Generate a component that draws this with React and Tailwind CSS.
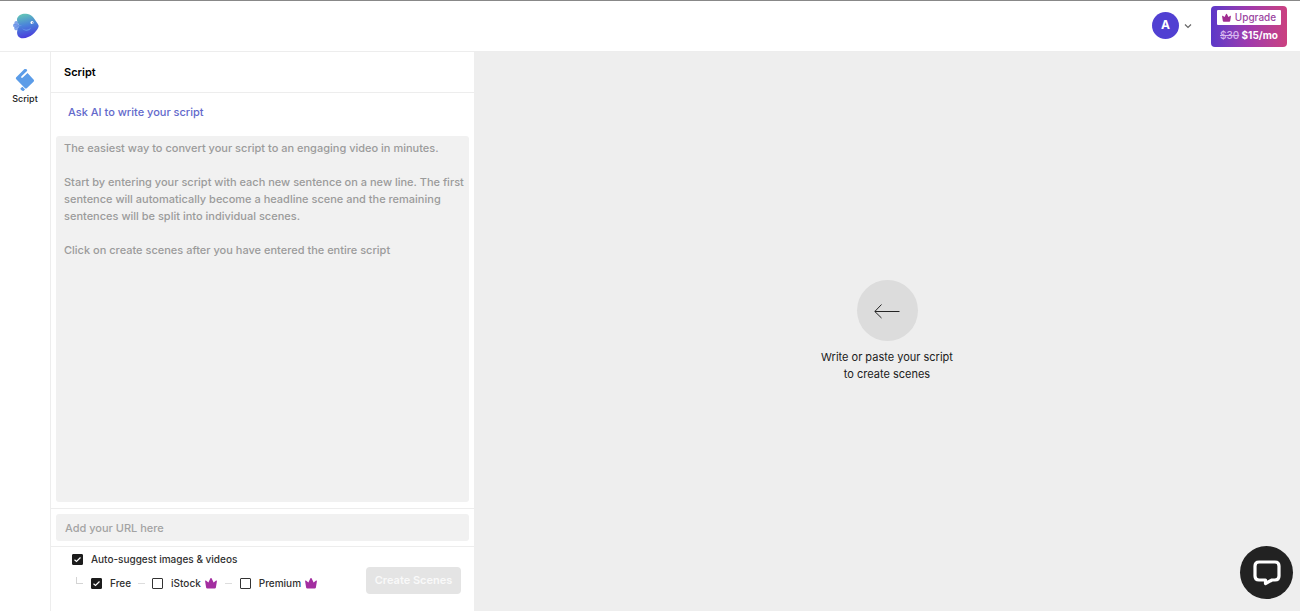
import { useState } from 'react';

const scriptHint = `The easiest way to convert your script to an engaging video in minutes.

Start by entering your script with each new sentence on a new line. The first sentence will automatically become a headline scene and the remaining sentences will be split into individual scenes.

Click on create scenes after you have entered the entire script`;

function Logo() {
  return (
    <svg viewBox="0 0 26 26" className="size-[26px]" aria-label="Home" role="img">
      <defs>
        <linearGradient id="fish" x1="0.4" y1="0" x2="0.6" y2="1">
          <stop offset="0" stopColor="#62c3b8" />
          <stop offset="0.45" stopColor="#4a83da" />
          <stop offset="1" stopColor="#4a35dc" />
        </linearGradient>
      </defs>
      <path d="M5 9C3.500 7 1 8 1.500 10.500C-.5 11-.3 14 1.300 14.300C.5 17 3.500 18.500 5.500 16Z" fill="#80a4ea" />
      <path d="M4 6C5 2 9 .4 13 .7C18 1 21 4.500 23.500 9C25.500 12 26 12.500 25.500 14C23.500 19 17 25 10 25.300C5.500 25.300 3.500 22 4.200 18C4.500 16 5.700 14.500 5.700 12.500C5.700 10 3.500 8.500 4 6Z" fill="url(#fish)" />
      <path d="M9 15C11 17 15 17.500 18 14.500C17 18.500 11 19 9 15Z" fill="#6799ea" />
      <path d="M1 11.500L7 12.500L2 14.500" fill="none" stroke="#6991e6" strokeWidth="1.200" />
      <circle cx="19" cy="9.500" r="1.500" fill="#fff" />
      <circle cx="19.600" cy="9.800" r="0.600" fill="#3762b9" />
    </svg>
  );
}

function ScriptIcon() {
  return (
    <svg viewBox="0 0 20 24" className="h-6 w-5" fill="#5b9ce8" aria-hidden="true">
      <path d="M1.500 9L9 1.500C10.500 .3 13 1.500 12 3L6.500 8.300C5.500 9.300 6.700 10.500 7.800 9.500L12.500 5L18.500 11.500C19.200 12.300 19.200 13 18.500 13.700L12 20C11.200 20.700 10.500 20.700 9.800 20L1.500 11.500C.5 10.500.7 9.800 1.500 9Z" />
      <path d="M5.500 20.300L7.500 18.800L10 21.500L8.500 23C7.500 23.500 5 21.500 5.500 20.300Z" />
    </svg>
  );
}

function Crown({ className }) {
  return (
    <svg viewBox="0 0 12 12" className={className} fill="currentColor" aria-hidden="true">
      <path d="M0.900 3.600L3.400 5.400L5.400 1.300A.8.8 0 0 1 6.600 1.300L8.600 5.400L11.100 3.600A.6.6 0 0 1 11.900 4.200L10.900 10.500Q10.700 11.500 9.700 11.500H2.300Q1.300 11.500 1.100 10.500L.1 4.200A.6.6 0 0 1 .9 3.600Z" />
    </svg>
  );
}

function Checkbox({ label, checked, onChange, children }) {
  return (
    <label className="flex items-center gap-2 text-[10px] leading-4 font-medium text-[#303030]">
      <span className="grid size-[11px] shrink-0">
        <input type="checkbox" checked={checked} onChange={onChange} className="col-start-1 row-start-1 size-[11px] appearance-none rounded-[1px] border border-[#333] bg-white checked:border-[#1c1c1c] checked:bg-[#1c1c1c]" />
        {checked && (
          <svg viewBox="0 0 11 11" className="pointer-events-none col-start-1 row-start-1 size-[11px]" fill="none" stroke="#fff" strokeWidth="1.200">
            <path d="M2.500 5.800L4.500 7.500L8.500 3.500" />
          </svg>
        )}
      </span>
      <span className="flex items-center gap-1">{label}{children}</span>
    </label>
  );
}

export default function App() {
  const [script, setScript] = useState('');
  const [url, setUrl] = useState('');
  const [options, setOptions] = useState({ auto: true, free: true, istock: false, premium: false });

  function toggle(name) {
    setOptions({ ...options, [name]: !options[name] });
  }

  return (
    <div className="flex h-screen flex-col bg-white font-['Inter',sans-serif] text-[11px] text-[#202020]">
      <header className="flex h-[52px] shrink-0 items-center justify-between border-t border-b border-t-[#888] border-b-[#ededed] pr-[13px] pl-[13px]">
        <a href="#"><Logo /></a>
        <div className="flex items-center">
          <button className="flex items-center gap-1" aria-label="Account">
            <span className="mb-[2px] flex size-[27px] items-center justify-center rounded-full bg-[#5140d2] text-[12px] font-bold text-white">A</span>
            <svg viewBox="0 0 10 10" className="size-[10px]" fill="none" stroke="#666" strokeWidth="1.200"><path d="M2 3.500L5 6.500L8 3.500" /></svg>
          </button>
          <button className="ml-[18px] flex h-[41px] w-[76px] flex-col items-center justify-center gap-[2px] rounded-[4px] bg-linear-to-r from-[#5b37c8] via-[#a039ac] to-[#cb407f] text-white">
            <span className="flex h-[15px] w-16 items-center justify-center gap-1 rounded-[1px] bg-white text-[10px] leading-[15px] font-medium text-[#9b459f]">
              <Crown className="size-[9px] text-[#a02d91]" />Upgrade
            </span>
            <span className="text-[10px] leading-4 font-bold"><s className="font-medium text-[#d6b5ee]">$30</s> $15/mo</span>
          </button>
        </div>
      </header>

      <div className="flex min-h-0 flex-1">
        <nav className="w-[51px] shrink-0 border-r border-[#ededed] pt-4">
          <button className="flex w-full flex-col items-center text-[9px] leading-[13px] font-medium text-[#202020]">
            <ScriptIcon />
            Script
          </button>
        </nav>

        <main className="flex w-[423px] shrink-0 flex-col">
          <h1 className="flex h-[41px] shrink-0 items-center border-b border-[#ededed] px-[13px] text-[11px] font-semibold text-black">Script</h1>
          <div className="flex h-[43px] shrink-0 items-start px-[17px] pt-[11px]">
            <button className="text-[11px] leading-4 font-medium text-[#6369cb]">Ask AI to write your script</button>
          </div>
          <div className="flex min-h-0 flex-1 px-[5px] pb-[6px]">
            <textarea aria-label="Script" value={script} onChange={(event) => setScript(event.target.value)} placeholder={scriptHint} className="w-full resize-none rounded-[3px] bg-[#f1f1f1] py-1 pl-2 text-[11px] leading-[17px] font-medium outline-none placeholder:text-[#9b9b9b]" />
          </div>
          <div className="border-y border-[#ededed] px-[5px] py-[5px]">
            <input type="url" aria-label="URL" value={url} onChange={(event) => setUrl(event.target.value)} placeholder="Add your URL here" className="block h-[27px] w-full rounded-[3px] bg-[#f1f1f1] px-[9px] text-[11px] font-medium outline-none placeholder:text-[#a3a3a3]" />
          </div>
          <div className="flex h-16 shrink-0 justify-between pr-[13px] pl-[21px]">
            <div className="flex flex-col gap-2 pt-1">
              <Checkbox label="Auto-suggest images & videos" checked={options.auto} onChange={() => toggle('auto')} />
              <div className="flex items-center pl-1">
                <span className="mr-2 mb-[5px] h-[7px] w-[7px] border-b border-l border-[#d4d4d4]" />
                <Checkbox label="Free" checked={options.free} onChange={() => toggle('free')} />
                <span className="mx-[7px] h-px w-[7px] bg-[#ddd]" />
                <Checkbox label="iStock" checked={options.istock} onChange={() => toggle('istock')}><Crown className="size-3 text-[#a32ea0]" /></Checkbox>
                <span className="mx-2 h-px w-[7px] bg-[#ddd]" />
                <Checkbox label="Premium" checked={options.premium} onChange={() => toggle('premium')}><Crown className="size-3 text-[#a32ea0]" /></Checkbox>
              </div>
            </div>
            <button className="mt-5 h-[27px] w-[95px] rounded-[4px] bg-[#e4e4e4] text-[11px] font-semibold text-[#f9f9f9]">Create Scenes</button>
          </div>
        </main>

        <section className="relative flex flex-1 flex-col items-center justify-center gap-2 bg-[#eeeeee]">
          <div className="flex size-[61px] items-center justify-center rounded-full bg-[#dcdcdc]">
            <svg viewBox="0 0 26 16" className="h-4 w-[26px]" fill="none" stroke="#242424" strokeWidth="1"><path d="M25.500 8.500H1M7.500 1.500L.8 8.500L7.500 15" /></svg>
          </div>
          <p className="text-center text-[11px] leading-[17px]">Write or paste your script<br />to create scenes</p>
          <button aria-label="Open chat" className="absolute right-[7px] bottom-3 flex size-[53px] items-center justify-center rounded-full bg-[#222]">
            <svg viewBox="0 0 28 28" className="size-7" fill="none" stroke="#fff" strokeWidth="3.200" strokeLinejoin="round">
              <path d="M6 3H22Q26 3 26 7V17Q26 21 22 21H19L12.500 24.500V21H6Q2 21 2 17V7Q2 3 6 3Z" />
            </svg>
          </button>
        </section>
      </div>
    </div>
  );
}
